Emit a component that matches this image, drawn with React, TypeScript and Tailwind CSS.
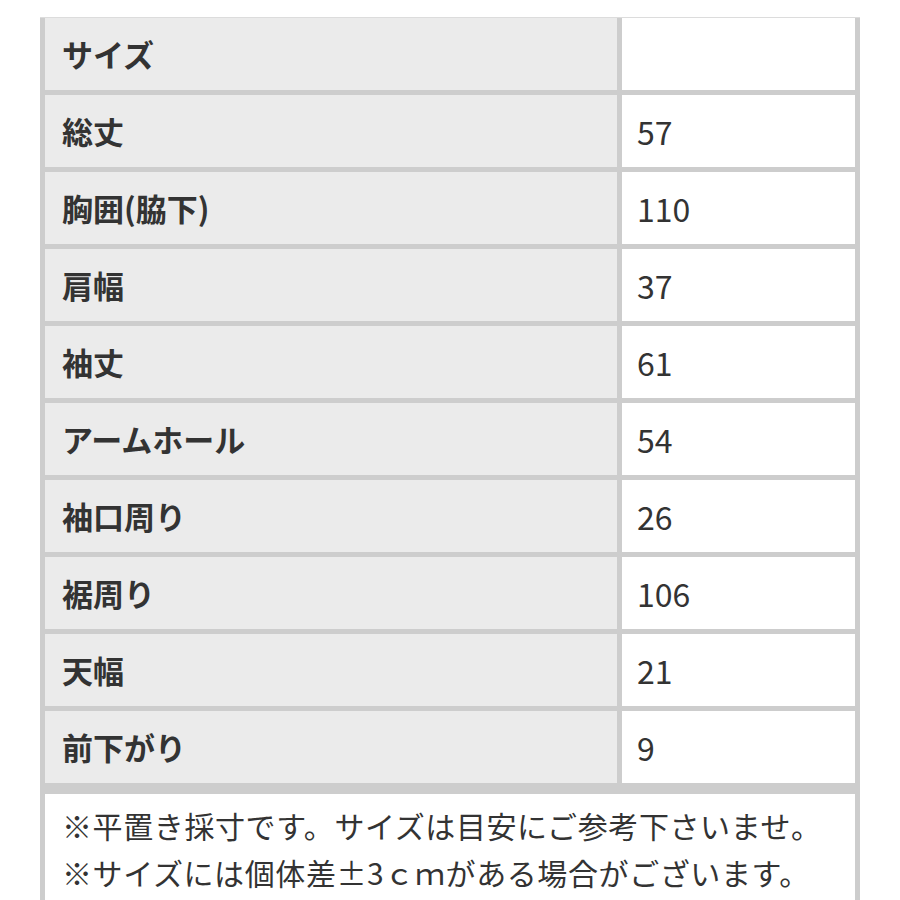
const rows: [string, string][] = [
  ['サイズ', ''],
  ['総丈', '57'],
  ['胸囲(脇下)', '110'],
  ['肩幅', '37'],
  ['袖丈', '61'],
  ['アームホール', '54'],
  ['袖口周り', '26'],
  ['裾周り', '106'],
  ['天幅', '21'],
  ['前下がり', '9'],
]

export default function App() {
  return (
    <div
      className="h-[900px] w-[900px] overflow-hidden bg-white pt-[17px] pl-[40px] text-[#333]"
      style={{ fontFamily: '"Noto Sans CJK JP", "Noto Sans", sans-serif' }}
    >
      <div className="w-[820px] border-t border-[#dcdcdc] bg-[#cdcdcd] pr-[5px] pl-[5px]">
        <div className="grid grid-cols-[572px_233px] gap-[5px]">
          {rows.map(([label, value]) => (
            <div key={label} className="contents">
              <div className="flex h-[72px] items-center bg-[#ebebeb] pl-[17px] text-[31px] font-bold">{label}</div>
              <div className="flex h-[72px] items-center bg-white pl-[15px] text-[32px]">{value}</div>
            </div>
          ))}
        </div>
        <div className="mt-[11px] bg-white pt-[8px] pb-6 pl-[17px] text-[30px] leading-[47px] tracking-[0.6px]">
          <p>※平置き採寸です。サイズは目安にご参考下さいませ。</p>
          <p>※サイズには個体差±3ｃｍがある場合がございます。</p>
        </div>
      </div>
    </div>
  )
}
